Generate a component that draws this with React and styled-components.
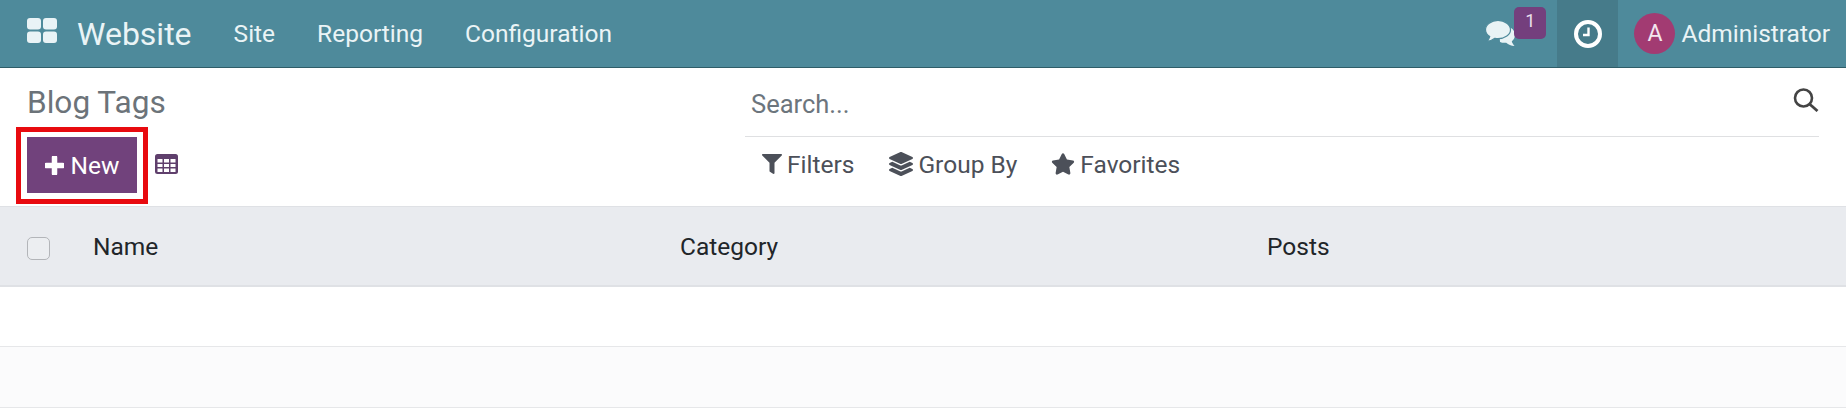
import React from "react";
import styled, { createGlobalStyle } from "styled-components";
import { FaFilter, FaLayerGroup, FaStar } from "react-icons/fa";

const Global = createGlobalStyle`
  html, body { margin: 0; padding: 0; background: #fff; }
  body { font-family: Roboto, "Noto Sans", sans-serif; overflow: hidden; }
`;

const Page = styled.div`width: 1846px; height: 408px; overflow: hidden; background: #fff;`;

const NavBar = styled.header`
  height: 67px; border-bottom: 1px solid #2f5d68; background: #4e8a9b; color: #eaf4f6;
  display: flex; align-items: center; padding-left: 27px;
`;
const AppsIcon = styled.svg`width: 30px; height: 25px; margin-right: 20px; flex: none; position: relative; top: -3px;`;
const Brand = styled.span`font-size: 32px; margin-right: 42px;`;
const MenuItem = styled.span`font-size: 24.5px; margin-right: 42px;`;
const NavRight = styled.div`margin-left: auto; display: flex; align-items: stretch; height: 100%;`;
const Messages = styled.div`position: relative; width: 72px; display: flex; align-items: center;`;
const Badge = styled.span`
  position: absolute; left: 29px; top: 7px; width: 32px; height: 32px; border-radius: 5px;
  background: #743f7d; color: #eadfec; font-size: 18px; text-align: center; line-height: 28px;
`;
const ClockCell = styled.div`width: 61px; background: #467b8a; display: flex; align-items: center; justify-content: center;`;
const UserCell = styled.div`display: flex; align-items: center; padding: 0 16px 0 16px;`;
const Avatar = styled.span`
  width: 41px; height: 41px; border-radius: 50%; background: #a23b72; color: #f3e6ee;
  display: flex; align-items: center; justify-content: center; font-size: 23px; margin-right: 6px;
`;
const UserName = styled.span`font-size: 24.5px;`;

const ControlPanel = styled.section`
  height: 138px; display: grid; grid-template-columns: 745px 1074px;
`;
const LeftPanel = styled.div`display: flex; flex-direction: column; padding-left: 27px;`;
const Title = styled.h1`margin: 17px 0 0; font-size: 31.6px; line-height: 36px; font-weight: 400; color: #6c7379;`;
const Actions = styled.div`display: flex; align-items: center; margin: 6px 0 0 -11px;`;
const Highlight = styled.div`
  border: 5px solid #e80a0f; padding: 5px 6px 6px; display: flex; width: 132px; height: 77px; box-sizing: border-box;
`;
const NewButton = styled.button`
  width: 110px; height: 56px; border: 0; background: #71427c; color: #fff; padding: 0;
  font: 400 24.5px Roboto, sans-serif; display: flex; align-items: center; justify-content: center; gap: 7px;
`;
const PlusIcon = styled.svg`width: 19px; height: 19px; flex: none;`;
const TableIcon = styled.svg`width: 23px; height: 20px; margin: 0 0 3px 7px;`;
const RightPanel = styled.div`display: flex; flex-direction: column;`;
const SearchRow = styled.div`
  height: 68px; border-bottom: 1px solid #dfe0e2; display: flex; align-items: center; justify-content: space-between;
`;
const Placeholder = styled.span`font-size: 25.5px; color: #6c757d; margin-left: 6px; position: relative; top: 2px;`;
const SearchIcon = styled.svg`width: 26px; height: 24px; position: relative; top: -2px;`;
const FilterRow = styled.div`display: flex; align-items: center; height: 54px; padding-left: 17px; color: #4c5059;`;
const FilterItem = styled.span`
  display: flex; align-items: center; font-size: 24.5px; gap: ${(p) => p.$gap}px; margin-right: ${(p) => p.$end}px;
  svg { flex: none; }
`;

const HeaderRow = styled.div`
  height: 78px; background: #e9ebef; border-top: 1px solid #dfe1e5; border-bottom: 2px solid #dfe1e5;
  display: grid; grid-template-columns: 93px 587px 587px 1fr; align-items: center; font-size: 24.5px; color: #212529;
`;
const CheckCell = styled.div`padding-left: 27px; display: flex;`;
const CheckBox = styled.span`
  width: 23px; height: 23px; box-sizing: border-box; border: 1px solid #b3b5b9; border-radius: 5px; background: #eceef1;
  position: relative; top: 2px;
`;
const BodyRow = styled.div`
  height: ${(p) => (p.$alt ? 60 : 59)}px; border-bottom: 1px solid #e6e7e9; background: ${(p) => (p.$alt ? "#fbfbfc" : "#fff")};
`;

function Clock() {
  return (
    <svg width="28" height="28" viewBox="0 0 28 28" aria-hidden="true">
      <circle cx="14" cy="14" r="12" fill="none" stroke="#fff" strokeWidth="4" />
      <path d="M14.5 7.5v7.5H9" fill="none" stroke="#fff" strokeWidth="2.4" />
    </svg>
  );
}

function Comments() {
  return (
    <svg width="32" height="27" viewBox="0 0 32 27" aria-hidden="true">
      <path d="M14 8h12c2.500 1.500 4 4 4 7 0 2.600-1.200 4.800-3.200 6.300.3 1.500 1.300 3 2.700 4.700-3.300-.3-6.200-1.500-8.300-3.300-2 .3-4.600.1-6.200-.7z" fill="#e9f3f5" />
      <path d="M13 .5C6.100.5.500 4.600.500 9.700c0 2.700 1.600 5.200 4.200 6.900-.4 1.700-1.300 3.300-2.700 4.700 3-.1 5.800-1.200 7.900-3 1 .2 2 .3 3.100.3 6.900 0 12.500-4 12.500-8.900S19.900.5 13 .5z" fill="#e9f3f5" stroke="#4e8a9b" strokeWidth="1.200" />
    </svg>
  );
}

export default function App() {
  return (
    <Page>
      <Global />
      <NavBar>
        <AppsIcon viewBox="0 0 30 25" aria-hidden="true">
          <rect x="0" y="0" width="14" height="11.500" rx="3" fill="#e9f3f6" />
          <rect x="16" y="0" width="14" height="11.500" rx="3" fill="#e9f3f6" />
          <rect x="0" y="13.500" width="14" height="11.500" rx="3" fill="#e9f3f6" />
          <rect x="16" y="13.500" width="14" height="11.500" rx="3" fill="#e9f3f6" />
        </AppsIcon>
        <Brand>Website</Brand>
        <MenuItem>Site</MenuItem>
        <MenuItem>Reporting</MenuItem>
        <MenuItem>Configuration</MenuItem>
        <NavRight>
          <Messages>
            <Comments />
            <Badge>1</Badge>
          </Messages>
          <ClockCell><Clock /></ClockCell>
          <UserCell>
            <Avatar>A</Avatar>
            <UserName>Administrator</UserName>
          </UserCell>
        </NavRight>
      </NavBar>
      <ControlPanel>
        <LeftPanel>
          <Title>Blog Tags</Title>
          <Actions>
            <Highlight>
              <NewButton>
                <PlusIcon viewBox="0 0 19 19" aria-hidden="true">
                  <path d="M9.500 1.500v16M1.500 9.500h16" stroke="#fff" strokeWidth="5.500" strokeLinecap="round" />
                </PlusIcon>
                New
              </NewButton>
            </Highlight>
            <TableIcon viewBox="0 0 23 20" aria-hidden="true">
              <rect x="0" y="0" width="23" height="20" rx="2.500" fill="#5f3f6c" />
              <path d="M2.500 5h5v3.500h-5zM9 5h5v3.500H9zM15.500 5h5v3.500h-5zM2.500 10h5v3h-5zM9 10h5v3H9zM15.500 10h5v3h-5zM2.500 14.500h5V18h-5zM9 14.500h5V18H9zM15.500 14.500h5V18h-5z" fill="#fff" />
            </TableIcon>
          </Actions>
        </LeftPanel>
        <RightPanel>
          <SearchRow>
            <Placeholder>Search...</Placeholder>
            <SearchIcon viewBox="0 0 26 24" aria-hidden="true">
              <circle cx="10.500" cy="10" r="8.500" fill="none" stroke="#444" strokeWidth="2.600" />
              <path d="M16.500 16l8 7" stroke="#444" strokeWidth="2.800" />
            </SearchIcon>
          </SearchRow>
          <FilterRow>
            <FilterItem $gap={5} $end={35}><FaFilter size={20} />Filters</FilterItem>
            <FilterItem $gap={5} $end={34}><FaLayerGroup size={24} />Group By</FilterItem>
            <FilterItem $gap={5} $end={0}><FaStar size={24} />Favorites</FilterItem>
          </FilterRow>
        </RightPanel>
      </ControlPanel>
      <HeaderRow>
        <CheckCell><CheckBox /></CheckCell>
        <span>Name</span>
        <span>Category</span>
        <span>Posts</span>
      </HeaderRow>
      <BodyRow />
      <BodyRow $alt />
    </Page>
  );
}
